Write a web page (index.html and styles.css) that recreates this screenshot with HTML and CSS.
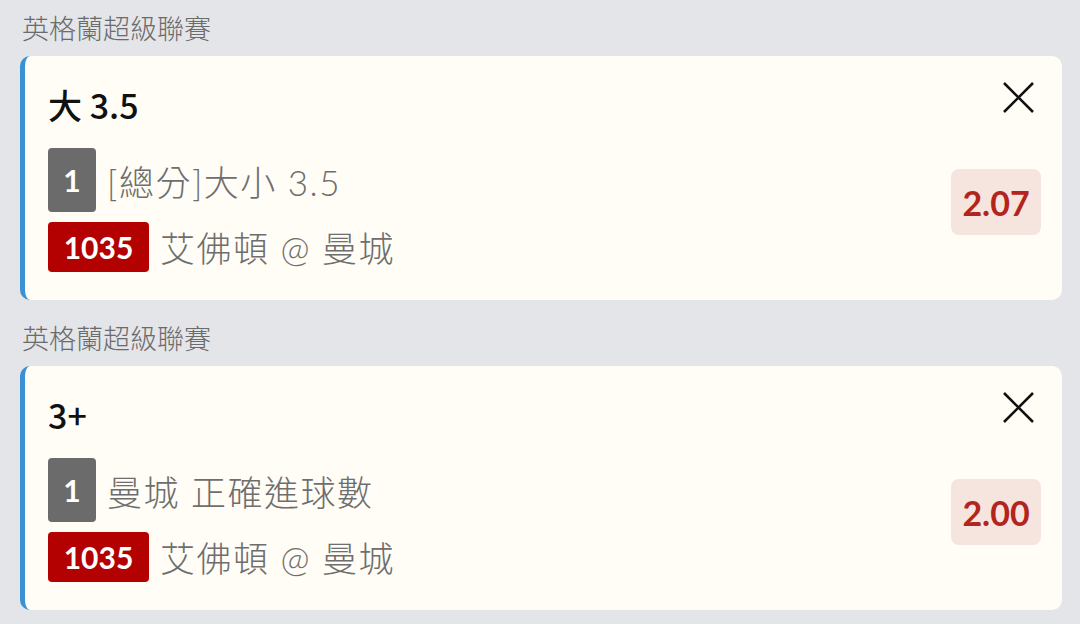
FILE: index.html
```html
<!DOCTYPE html>
<html lang="zh-Hant">

<head>
    <meta charset="UTF-8">
    <meta name="viewport" content="width=device-width, initial-scale=1.0">
    <title>投注單</title>
    <link rel="stylesheet" href="styles.css">
</head>

<body>

    <div class="slip">
        <div class="league">英格蘭超級聯賽</div>
        <div class="bet-card">
            <div class="bet-main">
                <div class="bet-title">大 3.5</div>
                <div class="bet-line">
                    <span class="leg-badge">1</span>
                    <span class="bet-text">[總分]大小 3.5</span>
                </div>
                <div class="bet-line">
                    <span class="match-badge">1035</span>
                    <span class="bet-text">艾佛頓 @ 曼城</span>
                </div>
            </div>
            <div class="bet-side">
                <button class="close-btn" type="button" aria-label="移除">
                    <svg width="31" height="31" viewBox="0 0 31 31">
                        <path d="M1 1 L30 30 M30 1 L1 30" stroke="#111" stroke-width="2.6" fill="none" />
                    </svg>
                </button>
                <div class="odds">2.07</div>
            </div>
        </div>

        <div class="league">英格蘭超級聯賽</div>
        <div class="bet-card">
            <div class="bet-main">
                <div class="bet-title">3+</div>
                <div class="bet-line">
                    <span class="leg-badge">1</span>
                    <span class="bet-text">曼城 正確進球數</span>
                </div>
                <div class="bet-line">
                    <span class="match-badge">1035</span>
                    <span class="bet-text">艾佛頓 @ 曼城</span>
                </div>
            </div>
            <div class="bet-side">
                <button class="close-btn" type="button" aria-label="移除">
                    <svg width="31" height="31" viewBox="0 0 31 31">
                        <path d="M1 1 L30 30 M30 1 L1 30" stroke="#111" stroke-width="2.6" fill="none" />
                    </svg>
                </button>
                <div class="odds">2.00</div>
            </div>
        </div>
    </div>

</body>

</html>
```

FILE: styles.css
```css
body {
    margin: 0;
    background-color: #e4e5e9;
    font-family: Lato, "Noto Sans CJK TC", sans-serif;
}

.slip {
    padding: 11px 18px 0 20px;
}

.league {
    font-size: 27px;
    line-height: 36px;
    color: #6b6b6b;
    font-weight: 300;
    margin-left: 2px;
    margin-bottom: 9px;
}

.bet-card {
    display: flex;
    background-color: #fffdf5;
    border-left: 5px solid #3b91d5;
    border-radius: 10px;
    padding: 28px 0 28px 23px;
    margin-bottom: 21px;
}

.bet-main {
    flex: 1;
}

.bet-title {
    font-family: "Noto Sans CJK TC", sans-serif;
    font-size: 34px;
    line-height: 41px;
    font-weight: 500;
    color: #111;
    margin-bottom: 23px;
}

.bet-line {
    display: flex;
    align-items: center;
    gap: 11px;
}

.bet-line + .bet-line {
    margin-top: 9px;
}

.leg-badge {
    display: inline-flex;
    align-items: center;
    justify-content: center;
    width: 48px;
    height: 64px;
    background-color: #6b6b6b;
    color: #fff;
    font-size: 30px;
    font-weight: bold;
    border-radius: 4px;
}

.match-badge {
    display: inline-flex;
    align-items: center;
    justify-content: center;
    width: 101px;
    height: 50px;
    background-color: #b30000;
    color: #fff;
    font-size: 30px;
    font-weight: bold;
    border-radius: 4px;
}

.bet-text {
    font-size: 35px;
    font-weight: 300;
    letter-spacing: 1.5px;
    color: #6e6e6e;
}

.bet-side {
    display: flex;
    flex-direction: column;
    align-items: flex-end;
    margin-top: -2px;
    padding-right: 21px;
}

.close-btn {
    background: none;
    border: none;
    padding: 0;
    margin-right: 7px;
    width: 31px;
    height: 31px;
    cursor: pointer;
}

.close-btn svg {
    display: block;
}

.odds {
    margin-top: 56px;
    width: 90px;
    height: 66px;
    display: flex;
    align-items: center;
    justify-content: center;
    background-color: #f6e5df;
    color: #b3241c;
    font-size: 34px;
    font-weight: bold;
    border-radius: 8px;
}
```
